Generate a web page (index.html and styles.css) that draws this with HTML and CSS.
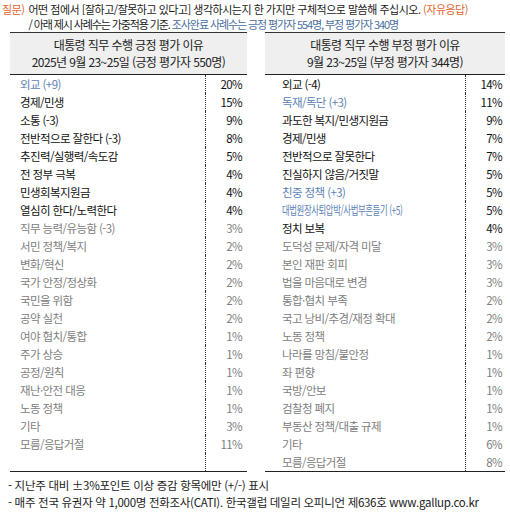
FILE: index.html
```html
<!DOCTYPE html>
<html lang="ko">
<head>
    <meta charset="UTF-8">
    <meta name="viewport" content="width=device-width, initial-scale=1.0">
    <title>대통령 직무 수행 평가 이유</title>
    <link rel="stylesheet" href="styles.css">
</head>
<body>
    <div class="pergunta">
        <span class="rotulo">질문)</span>
        <p>어떤 점에서 [잘하고/잘못하고 있다고] 생각하시는지 한 가지만 구체적으로 말씀해 주십시오. <span class="laranja">(자유응답)</span><br>
        <span class="linha2">/ 아래 제시 사례수는 가중적용 기준. <span class="azul-escuro">조사완료 사례수는 긍정 평가자 554명, 부정 평가자 340명</span></span></p>
    </div>

    <div class="tabelas">
        <!-- 긍정 평가 이유 -->
        <table class="tabela esquerda">
            <thead>
                <tr><th colspan="2">대통령 직무 수행 긍정 평가 이유<br>2025년 9월 23~25일 (긍정 평가자 550명)</th></tr>
            </thead>
            <tbody>
                <tr class="azul"><td>외교 (+9)</td><td class="pct">20%</td></tr>
                <tr><td>경제/민생</td><td class="pct">15%</td></tr>
                <tr><td>소통 (-3)</td><td class="pct">9%</td></tr>
                <tr><td>전반적으로 잘한다 (-3)</td><td class="pct">8%</td></tr>
                <tr><td>추진력/실행력/속도감</td><td class="pct">5%</td></tr>
                <tr><td>전 정부 극복</td><td class="pct">4%</td></tr>
                <tr><td>민생회복지원금</td><td class="pct">4%</td></tr>
                <tr><td>열심히 한다/노력한다</td><td class="pct">4%</td></tr>
                <tr class="cinza"><td>직무 능력/유능함 (-3)</td><td class="pct">3%</td></tr>
                <tr class="cinza"><td>서민 정책/복지</td><td class="pct">2%</td></tr>
                <tr class="cinza"><td>변화/혁신</td><td class="pct">2%</td></tr>
                <tr class="cinza"><td>국가 안정/정상화</td><td class="pct">2%</td></tr>
                <tr class="cinza"><td>국민을 위함</td><td class="pct">2%</td></tr>
                <tr class="cinza"><td>공약 실천</td><td class="pct">2%</td></tr>
                <tr class="cinza"><td>여야 협치/통합</td><td class="pct">1%</td></tr>
                <tr class="cinza"><td>주가 상승</td><td class="pct">1%</td></tr>
                <tr class="cinza"><td>공정/원칙</td><td class="pct">1%</td></tr>
                <tr class="cinza"><td>재난·안전 대응</td><td class="pct">1%</td></tr>
                <tr class="cinza"><td>노동 정책</td><td class="pct">1%</td></tr>
                <tr class="cinza"><td>기타</td><td class="pct">3%</td></tr>
                <tr class="cinza"><td>모름/응답거절</td><td class="pct">11%</td></tr>
                <tr><td></td><td class="pct"></td></tr>
            </tbody>
        </table>

        <!-- 부정 평가 이유 -->
        <table class="tabela direita">
            <thead>
                <tr><th colspan="2">대통령 직무 수행 부정 평가 이유<br>9월 23~25일 (부정 평가자 344명)</th></tr>
            </thead>
            <tbody>
                <tr><td>외교 (-4)</td><td class="pct">14%</td></tr>
                <tr class="azul"><td>독재/독단 (+3)</td><td class="pct">11%</td></tr>
                <tr><td>과도한 복지/민생지원금</td><td class="pct">9%</td></tr>
                <tr><td>경제/민생</td><td class="pct">7%</td></tr>
                <tr><td>전반적으로 잘못한다</td><td class="pct">7%</td></tr>
                <tr><td>진실하지 않음/거짓말</td><td class="pct">5%</td></tr>
                <tr class="azul"><td>친중 정책 (+3)</td><td class="pct">5%</td></tr>
                <tr class="azul"><td><span class="estreito">대법원장사퇴압박/사법부흔들기 (+5)</span></td><td class="pct">5%</td></tr>
                <tr><td>정치 보복</td><td class="pct">4%</td></tr>
                <tr class="cinza"><td>도덕성 문제/자격 미달</td><td class="pct">3%</td></tr>
                <tr class="cinza"><td>본인 재판 회피</td><td class="pct">3%</td></tr>
                <tr class="cinza"><td>법을 마음대로 변경</td><td class="pct">3%</td></tr>
                <tr class="cinza"><td>통합·협치 부족</td><td class="pct">2%</td></tr>
                <tr class="cinza"><td>국고 낭비/추경/재정 확대</td><td class="pct">2%</td></tr>
                <tr class="cinza"><td>노동 정책</td><td class="pct">2%</td></tr>
                <tr class="cinza"><td>나라를 망침/불안정</td><td class="pct">1%</td></tr>
                <tr class="cinza"><td>좌 편향</td><td class="pct">1%</td></tr>
                <tr class="cinza"><td>국방/안보</td><td class="pct">1%</td></tr>
                <tr class="cinza"><td>검찰청 폐지</td><td class="pct">1%</td></tr>
                <tr class="cinza"><td>부동산 정책/대출 규제</td><td class="pct">1%</td></tr>
                <tr class="cinza"><td>기타</td><td class="pct">6%</td></tr>
                <tr class="cinza"><td>모름/응답거절</td><td class="pct">8%</td></tr>
            </tbody>
        </table>
    </div>

    <div class="rodape">
        <p>- 지난주 대비 ±3%포인트 이상 증감 항목에만 (+/-) 표시</p>
        <p>- 매주 전국 유권자 약 1,000명 전화조사(CATI). 한국갤럽 데일리 오피니언 제636호 www.gallup.co.kr</p>
    </div>
</body>
</html>
```

FILE: styles.css
```css
body {
    margin: 0;
    width: 510px;
    font-family: "Noto Sans CJK KR", "Noto Sans", sans-serif;
    color: #1a1a1a;
    background: #fff;
}
p {
    margin: 0;
}

.pergunta {
    display: flex;
    gap: 4px;
    padding: 2px 0 0 2px;
    font-size: 11px;
    letter-spacing: -0.5px;
    line-height: 15px;
}
.rotulo,
.laranja {
    color: #e0662e;
}
.linha2 {
    letter-spacing: -1.1px;
}
.azul-escuro {
    color: #4a6e9e;
}

.tabelas {
    display: flex;
    gap: 18px;
    padding-left: 10px;
}
.tabela {
    border-collapse: collapse;
    font-size: 11.5px;
    letter-spacing: -0.6px;
    border-bottom: 1.5px solid #222;
}
.esquerda {
    width: 237px;
}
.direita {
    width: 240px;
}
.tabela th {
    background-color: #efefef;
    border-top: 1.5px solid #333;
    border-bottom: 1.5px solid #222;
    font-weight: normal;
    font-size: 12px;
    line-height: 17px;
    padding: 3px 0 4px;
    color: #222;
}
.tabela td {
    height: 18px;
    padding: 0;
    line-height: 18px;
    white-space: nowrap;
    color: #111;
}
.esquerda td:first-child {
    padding-left: 10px;
}
.direita td:first-child {
    padding-left: 17px;
}
.tabela .pct {
    border-left: 1px dotted #333;
    text-align: right;
    width: 36px;
}
.esquerda .pct {
    padding-right: 5px;
}
.direita .pct {
    padding-right: 3px;
}

.azul td:first-child {
    color: #5b82b6;
}
.cinza td {
    color: #808080;
}
.estreito {
    display: inline-block;
    font-size: 12px;
    transform: scaleX(0.7);
    transform-origin: left center;
}

.rodape {
    padding: 5px 0 0 8px;
    font-size: 11.5px;
    letter-spacing: -0.3px;
    line-height: 17px;
    color: #222;
}
```
